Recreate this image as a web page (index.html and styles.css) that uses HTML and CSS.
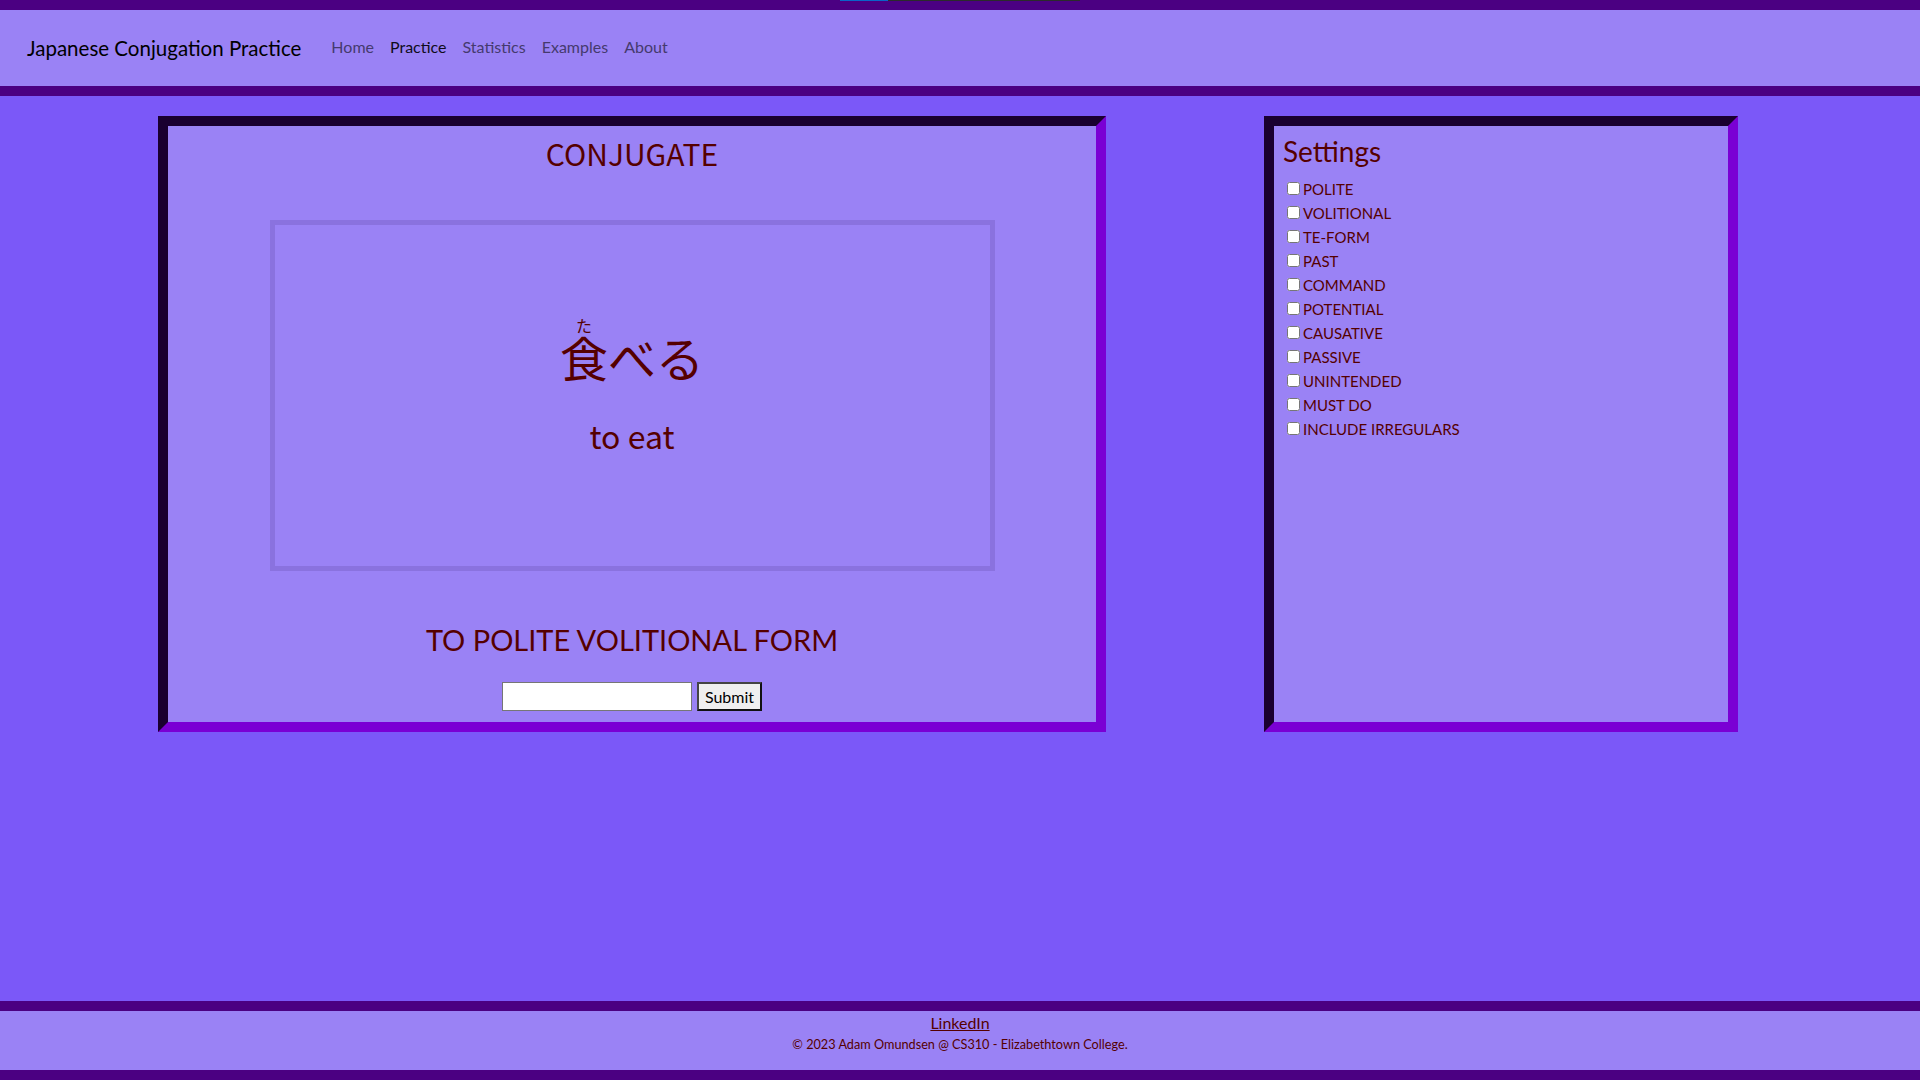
FILE: index.html
```html
<!DOCTYPE html>
<html lang="en">
<head>
<meta charset="utf-8">
<title>Japanese Conjugation Practice</title>
<link rel="stylesheet" href="styles.css">
</head>
<body>
<div class="topline"><span class="tl-blue"></span><span class="tl-dark"></span></div>
<nav class="navbar">
  <a class="brand" href="#">Japanese Conjugation Practice</a>
  <ul class="nav-links">
    <li><a class="nav-link" href="#">Home</a></li>
    <li><a class="nav-link active" href="#">Practice</a></li>
    <li><a class="nav-link" href="#">Statistics</a></li>
    <li><a class="nav-link" href="#">Examples</a></li>
    <li><a class="nav-link" href="#">About</a></li>
  </ul>
</nav>
<main class="main">
  <section class="panel practice">
    <h2 class="practice-title">CONJUGATE</h2>
    <div class="card">
      <div class="word" lang="ja"><ruby>食<rt>た</rt></ruby>べる</div>
      <div class="meaning">to eat</div>
    </div>
    <h2 class="target">TO POLITE VOLITIONAL FORM</h2>
    <form class="answer">
      <input class="answer-input" type="text">
      <button class="answer-btn" type="button">Submit</button>
    </form>
  </section>
  <aside class="panel settings">
    <h3 class="settings-title">Settings</h3>
    <label class="opt"><input type="checkbox">POLITE</label>
    <label class="opt"><input type="checkbox">VOLITIONAL</label>
    <label class="opt"><input type="checkbox">TE-FORM</label>
    <label class="opt"><input type="checkbox">PAST</label>
    <label class="opt"><input type="checkbox">COMMAND</label>
    <label class="opt"><input type="checkbox">POTENTIAL</label>
    <label class="opt"><input type="checkbox">CAUSATIVE</label>
    <label class="opt"><input type="checkbox">PASSIVE</label>
    <label class="opt"><input type="checkbox">UNINTENDED</label>
    <label class="opt"><input type="checkbox">MUST DO</label>
    <label class="opt"><input type="checkbox">INCLUDE IRREGULARS</label>
  </aside>
</main>
<footer class="footer">
  <a class="footer-link" href="#">LinkedIn</a>
  <p class="copy">© 2023 Adam Omundsen @ CS310 - Elizabethtown College.</p>
</footer>
</body>
</html>
```

FILE: styles.css
```css
* { box-sizing: border-box; }

html, body {
  margin: 0;
  padding: 0;
}

body {
  font-family: Lato, "Noto Sans", sans-serif;
  background: #7b58f8;
  color: #550000;
  min-height: 100vh;
  display: flex;
  flex-direction: column;
  position: relative;
}

.topline {
  position: absolute;
  top: 0;
  left: 840px;
  height: 1px;
  display: flex;
}
.tl-blue { width: 48px; background: #0a64c8; }
.tl-dark { width: 192px; background: #2b2b2b; }

.navbar {
  display: flex;
  align-items: center;
  height: 96px;
  background: #9a82f5;
  border-top: 10px solid #4b0082;
  border-bottom: 10px solid #4b0082;
  padding: 0 27px;
}

.brand {
  font-size: 20.5px;
  color: #000;
  text-decoration: none;
  margin-right: 22px;
}

.nav-links {
  display: flex;
  list-style: none;
  margin: 0 0 3px;
  padding: 0;
}

.nav-link {
  display: block;
  padding: 0 8px;
  font-size: 16px;
  color: #453a6e;
  text-decoration: none;
}
.nav-link.active { color: #0f0c1a; }

.main {
  flex: 1;
  display: flex;
  align-items: flex-start;
  padding: 20px 0 0 158px;
  gap: 158px;
}

.panel {
  background: #9a82f5;
  border-style: solid;
  border-width: 10px;
  border-color: #1a0030 #7a00d4 #7a00d4 #1a0030;
  height: 616px;
}

.practice {
  width: 948px;
  padding: 9px 10px 0;
  display: flex;
  flex-direction: column;
  align-items: center;
}

.practice-title {
  margin: 0;
  font-family: "Noto Sans CJK JP", sans-serif;
  font-weight: 400;
  font-size: 30px;
  line-height: 36px;
  height: 36px;
}

.card {
  margin-top: 49px;
  width: 725px;
  height: 351px;
  border: 5px solid #8a72df;
  display: flex;
  flex-direction: column;
  align-items: center;
  font-family: "Noto Sans CJK JP", sans-serif;
}

.word {
  margin-top: 92px;
  font-size: 48px;
  line-height: 1.3;
}

.word rt {
  font-size: 16px;
  line-height: 1;
}

.meaning {
  margin-top: 30px;
  font-size: 32px;
  line-height: 36px;
}

.target {
  margin: 51px 0 0;
  font-weight: 400;
  font-size: 29px;
  line-height: 36px;
}

.answer {
  margin-top: 24px;
  display: flex;
  gap: 5px;
}

.answer-input {
  width: 190px;
  height: 29px;
  border: 1px solid #767676;
  background: #fff;
  margin: 0;
  padding: 1px 2px;
}

.answer-btn {
  width: 65px;
  height: 29px;
  margin: 0;
  padding: 0;
  font-family: Lato, sans-serif;
  font-size: 16px;
  color: #000;
  background: #efefef;
  border: 2px solid;
  border-color: #444 #111 #111 #444;
}

.settings {
  width: 474px;
  padding: 9px 9px 0;
}

.settings-title {
  margin: 0 0 8px;
  font-weight: 400;
  font-size: 28px;
  line-height: 1.2;
}

.opt {
  display: flex;
  align-items: center;
  height: 24px;
  font-size: 15px;
}

.opt input {
  width: 13px;
  height: 13px;
  margin: 0 3px 0 4px;
}

.footer {
  height: 79px;
  background: #9a82f5;
  border-top: 10px solid #4b0082;
  border-bottom: 10px solid #4b0082;
  display: flex;
  flex-direction: column;
  align-items: center;
  padding-top: 2px;
}

.footer-link {
  font-size: 16px;
  line-height: 20px;
  color: #550000;
}

.copy {
  margin: 3px 0 0;
  font-size: 12.7px;
  line-height: 16px;
}
```
